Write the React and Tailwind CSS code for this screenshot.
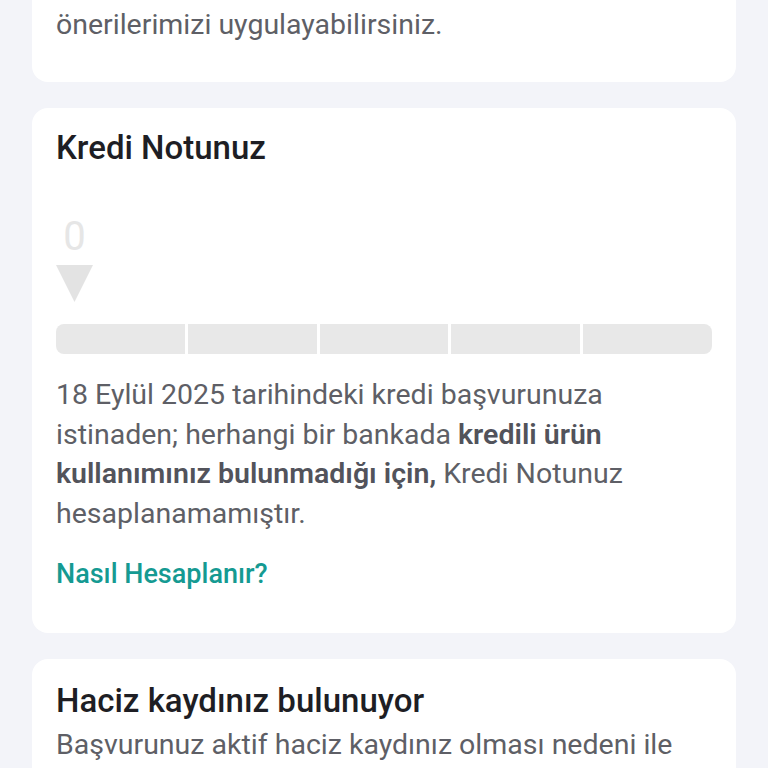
export default function App() {
  const segments = [0, 1, 2, 3, 4];
  return (
    <div
      className="min-h-[768px] w-[768px] overflow-hidden bg-[#f3f4f9] px-8"
      style={{ fontFamily: 'Roboto, "Noto Sans", sans-serif' }}
    >
      {/* top card (scrolled) */}
      <div className="-mt-[35px] rounded-b-2xl bg-white px-6 pb-[37px] text-[28.5px] leading-[40px] text-[#5e5f66]">
        <p>yapılandırabilir ve ilgili yollardan geçerek</p>
        <p>önerilerimizi uygulayabilirsiniz.</p>
      </div>

      {/* kredi notu card */}
      <div className="mt-[26px] rounded-2xl bg-white px-6 pt-6 pb-[43px]">
        <h2 className="text-[33px] font-medium leading-8 text-[#1e1e24]">Kredi Notunuz</h2>

        <div className="mt-[56px] flex w-[37px] flex-col items-center">
          <span className="text-[40px] leading-[34px] text-[#e6e6e6]">0</span>
          <svg className="mt-[11px]" width="37" height="37" viewBox="0 0 37 37">
            <polygon points="0,0 37,0 18.5,37" fill="#e3e3e3" />
          </svg>
        </div>

        <div className="mt-[22px] flex h-[30px] gap-[3px]">
          {segments.map((i) => (
            <div
              key={i}
              className={`flex-1 bg-[#e8e8e8] ${i === 0 ? 'rounded-l-lg' : ''} ${i === 4 ? 'rounded-r-lg' : ''}`}
            />
          ))}
        </div>

        <p className="mt-[21px] text-[28.5px] leading-[39.5px] text-[#5e5f66]">
          18 Eylül 2025 tarihindeki kredi başvurunuza
          <br />
          istinaden; herhangi bir bankada <span className="font-semibold text-[#52535b]">kredili ürün</span>
          <br />
          <span className="font-semibold text-[#52535b]">kullanımınız bulunmadığı için,</span> Kredi Notunuz
          <br />
          hesaplanamamıştır.
        </p>

        <a className="mt-[25px] block text-[27px] font-medium leading-8 text-[#159a92]">Nasıl Hesaplanır?</a>
      </div>

      {/* haciz card */}
      <div className="mt-[26px] rounded-t-2xl bg-white px-6 pt-[26px] pb-8">
        <h2 className="text-[33px] font-medium leading-8 text-[#1e1e24]">Haciz kaydınız bulunuyor</h2>
        <p className="mt-[8px] text-[28.5px] leading-[40px] text-[#5e5f66]">
          Başvurunuz aktif haciz kaydınız olması nedeni ile
          <br />
          olumsuz sonuçlanmıştır.
        </p>
      </div>
    </div>
  );
}
